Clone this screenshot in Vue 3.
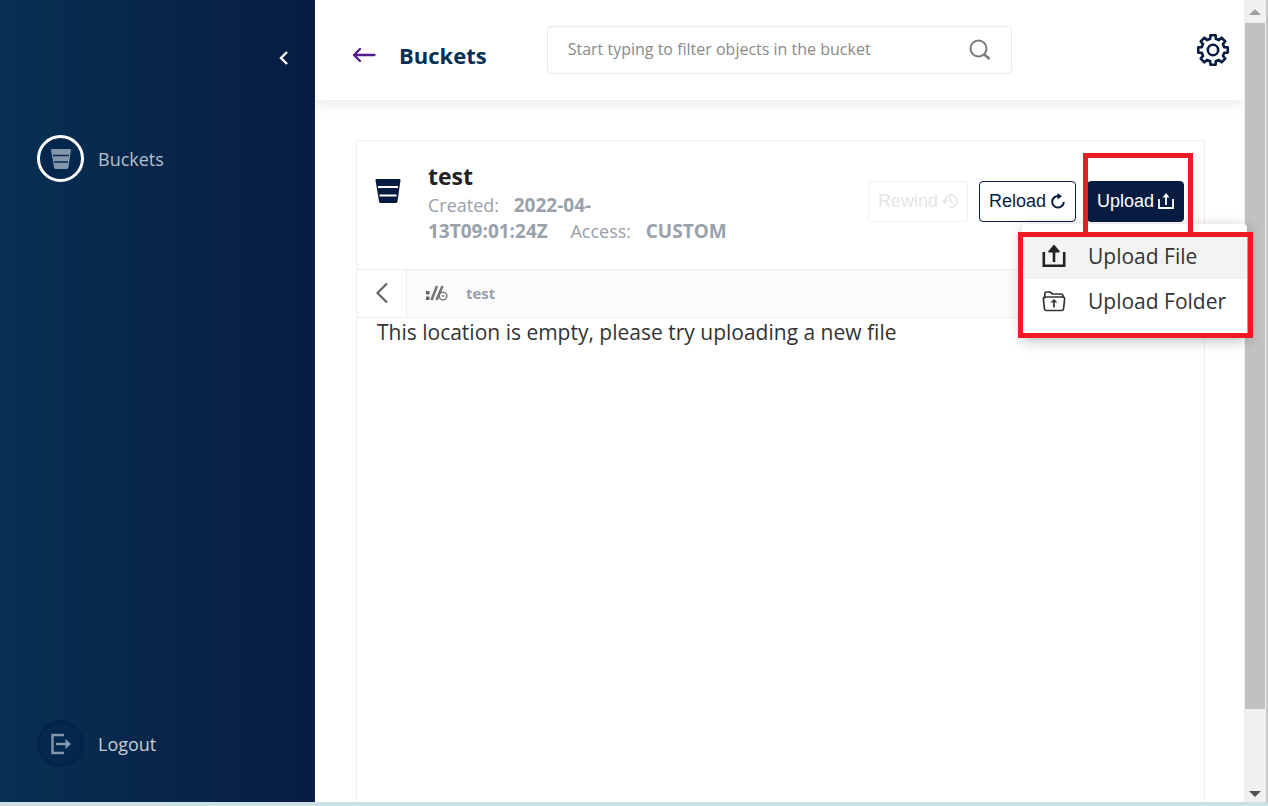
<script setup>
import { ref } from 'vue'

const filter = ref('')

const point = (radius, degrees) => {
  const angle = (degrees * Math.PI) / 180
  return `${(17 + radius * Math.cos(angle)).toFixed(2)} ${(17 + radius * Math.sin(angle)).toFixed(2)}`
}

const gearPath =
  'M' +
  Array.from({ length: 8 }, (_, i) => {
    const a = i * 45
    return [point(11.6, a - 14), point(15, a - 10), point(15, a + 10), point(11.6, a + 14)].join('L')
  }).join('L') +
  'Z'
</script>

<template>
  <div class="window">
    <div class="app">
      <nav class="sidebar">
        <button class="collapse" type="button" aria-label="Collapse menu">
          <svg width="12" height="16" viewBox="0 0 12 16"><path d="M9 2 3 8l6 6" fill="none" stroke="#fff" stroke-width="2.4" /></svg>
        </button>
        <a class="nav-item" href="#buckets">
          <span class="disc active">
            <svg width="20" height="20" viewBox="0 0 20 20">
              <path d="M1 0h18q1 0 1 1l-2.600 17.600Q17 20 16 20H4.500Q3.200 20 3 18.600L0 1Q0 0 1 0Z" fill="#8297ab" />
              <path d="M2 6.500h16M3 13h14" stroke="#06284c" stroke-width="1.600" />
            </svg>
          </span>
          Buckets
        </a>
        <a class="nav-item logout" href="#logout">
          <span class="disc">
            <svg width="20" height="22" viewBox="0 0 20 22" fill="none" stroke="#8297ab">
              <path d="M13 2H1.500v18H13" stroke-width="2.400" />
              <path d="M5 11h12" stroke-width="2.400" />
              <path d="m14.500 6 5.500 5-5.500 5Z" fill="#8297ab" stroke="none" />
            </svg>
          </span>
          Logout
        </a>
      </nav>

      <main class="main">
        <header class="topbar">
          <a class="back" href="#back" aria-label="Back to buckets">
            <svg width="24" height="16" viewBox="0 0 24 16" fill="none" stroke="#551a8b" stroke-width="2.300" stroke-linecap="round" stroke-linejoin="round"><path d="M22.500 8H2M8 2 2 8l6 6" /></svg>
          </a>
          <h1>Buckets</h1>
          <label class="search">
            <input v-model="filter" type="text" placeholder="Start typing to filter objects in the bucket" aria-label="Filter objects" />
            <svg width="22" height="22" viewBox="0 0 22 22" fill="none" stroke="#7a7a7a"><circle cx="9.500" cy="9.500" r="8" stroke-width="2" /><path d="m14.800 15 5.700 5" stroke-width="2.400" /></svg>
          </label>
          <button class="settings" type="button" aria-label="Settings">
            <svg width="34" height="34" viewBox="0 0 34 34" fill="none" stroke="#081c42" stroke-width="2.600" stroke-linejoin="round"><path :d="gearPath" /><circle cx="17" cy="17" r="5.200" /></svg>
          </button>
        </header>

        <section class="card">
          <div class="summary">
            <svg class="bucket" width="26" height="26" viewBox="0 0 26 26">
              <path d="M1.500 1h23q1.200 0 1 1.200l-3 21.300Q22.200 25 21 25H5.500Q4.200 25 4 23.500L.5 2.200Q.3 1 1.500 1Z" fill="#081c42" />
              <path d="M3 9h20M4.500 17.500h17" stroke="#fff" stroke-width="1.800" />
            </svg>
            <div class="details">
              <h2>test</h2>
              <p>Created: <b class="value">2022-04-<br />13T09:01:24Z</b> <span class="access">Access:</span> <b class="value">CUSTOM</b></p>
            </div>
            <div class="actions">
              <button class="btn disabled" type="button" disabled>
                Rewind
                <svg width="16" height="16" viewBox="0 0 16 16" fill="none" stroke="currentColor" stroke-width="1.700"><path d="M3 8a6 6 0 1 1 4 5.800M8.500 4.500V8l2.500 2" /><path d="M0 7h6L3 11Z" fill="currentColor" stroke="none" /></svg>
              </button>
              <button class="btn" type="button">
                Reload
                <svg width="16" height="16" viewBox="0 0 16 16" fill="none" stroke="currentColor" stroke-width="2"><path d="M8.500 3A5.800 5.800 0 1 0 13.800 9" /><path d="M7.500 0 12 3.300 7.500 6.500Z" fill="currentColor" stroke="none" /></svg>
              </button>
              <div class="upload">
                <button class="btn primary" type="button">
                  Upload
                  <svg width="16" height="16" viewBox="0 0 16 16" fill="none" stroke="currentColor" stroke-width="1.800"><path d="M1 6v9h14V6M8 12V3" /><path d="M4.500 4.500 8 0l3.500 4.500Z" fill="currentColor" stroke="none" /></svg>
                </button>
                <div class="menu">
                  <button class="menu-item hovered" type="button">
                    <svg width="24" height="24" viewBox="0 0 24 24" fill="none" stroke="#222" stroke-width="2.600"><path d="M1.800 8v13.700h20.400V8M12 18V4" /><path d="M6 7.500 12 .5l6 7-1 1H7Z" fill="#222" stroke="none" /></svg>
                    Upload File
                  </button>
                  <button class="menu-item" type="button">
                    <svg width="24" height="24" viewBox="0 0 24 24" fill="none" stroke="#333" stroke-width="1.700" stroke-linejoin="round"><path d="M2.800 9.500V4.800Q2.800 3 4.500 3H8l2.500 2H19q2 0 2 2v2M3 8h18q1.800 0 1.600 2l-1 9.500Q21.400 21.500 19.500 21.500h-15Q2.600 21.500 2.400 19.500L1.400 10Q1.200 8 3 8ZM12 18.500v-6" /><path d="m8.500 13.500 3.500-3.500 3.500 3.500Z" fill="#333" stroke="none" /></svg>
                    Upload Folder
                  </button>
                </div>
                <span class="mark mark-button"></span>
                <span class="mark mark-menu"></span>
              </div>
            </div>
          </div>
          <div class="path">
            <button class="up" type="button" aria-label="Up one level">
              <svg width="14" height="22" viewBox="0 0 14 22"><path d="M12 1.500 2.500 11l9.500 9.500" fill="none" stroke="#666" stroke-width="2.200" /></svg>
            </button>
            <div class="crumbs">
              <svg width="22" height="16" viewBox="0 0 22 16" fill="none" stroke="#777"><path d="M0 6h3.500v3.500H0zM0 11.500h3.500V15H0z" fill="#666" stroke="none" /><path d="m5.500 15 5.500-14M10.500 15l6-14" stroke-width="2.600" /><circle cx="17" cy="11" r="3.800" stroke-width="1.400" /><path d="M15.500 11h3" stroke-width="1.400" /></svg>
              <a href="#test">test</a>
            </div>
          </div>
          <p class="empty">This location is empty, please try uploading a new file</p>
        </section>
      </main>

      <div class="scrollbar" aria-hidden="true">
        <svg width="12" height="6" viewBox="0 0 12 6"><path d="M0 6 6 0l6 6Z" fill="#a0a0a0" /></svg>
        <div class="thumb"></div>
        <svg width="12" height="6" viewBox="0 0 12 6"><path d="m0 0 6 6 6-6Z" fill="#505050" /></svg>
      </div>
    </div>
    <div class="bottom-edge"></div>
  </div>
</template>

<style>
body { margin: 0; }
</style>

<style scoped>
* { box-sizing: border-box; }
svg { display: block; flex: none; }
h1, h2, p { margin: 0; }
a { text-decoration: none; color: inherit; }
button { padding: 0; border: 0; background: none; font: inherit; color: inherit; cursor: pointer; }
.window { display: flex; flex-direction: column; min-height: 100vh; font-family: "Open Sans", "Noto Sans", sans-serif; color: #333; background: #fff; }
.app { flex: 1; display: flex; }
.sidebar { flex: none; width: 315px; padding: 48px 23px 35px 37px; display: flex; flex-direction: column; background: linear-gradient(90deg, #073052 0%, #081c42 100%); border-right: 1px solid #10254c; }
.collapse { align-self: flex-end; width: 14px; height: 20px; display: grid; place-items: center; }
.nav-item { display: flex; align-items: center; gap: 14px; margin-top: 67px; font-size: 18px; color: #b4c0cc; }
.nav-item.logout { margin-top: auto; color: #c4ced8; }
.disc { width: 47px; height: 47px; border-radius: 50%; border: 3px solid #04234a; background: #03274d; display: grid; place-items: center; }
.disc.active { border-color: #fff; }
.main { flex: 1; min-width: 0; display: flex; flex-direction: column; }
.topbar { height: 100px; padding: 0 14px 0 37px; display: flex; align-items: center; box-shadow: 0 3px 12px rgba(0, 0, 0, .1); }
.back { margin-top: 10px; }
h1 { margin: 10px 60px 0 23px; font-size: 22px; line-height: 30px; font-weight: 700; color: #073052; }
.search { flex: 0 1 465px; height: 48px; padding: 0 20px; display: flex; align-items: center; border: 1px solid #eaeaea; border-radius: 4px; }
.search input { flex: 1; min-width: 0; padding: 0 0 2px; border: 0; outline: 0; font: 16px "Open Sans", sans-serif; color: #555; }
.search input::placeholder { color: #8a8a8a; opacity: 1; }
.settings { margin-left: auto; }
.card { flex: 1; margin: 40px 39px 0 41px; border: 1px solid #f0f0f0; border-bottom: 0; }
.summary { height: 128px; padding: 19px 20px; display: flex; }
.bucket { margin: 18px 27px 0 -2px; }
.details { flex: 1; white-space: nowrap; color: #99a1ab; font-size: 18px; line-height: 26px; }
h2 { font-size: 23px; line-height: 32px; color: #222; }
.value { margin-left: 10px; font-size: 19px; }
.access { margin-left: 18px; }
.actions { display: flex; gap: 11px; padding-top: 21px; }
.btn { height: 41px; padding: 0 9px 2px; display: flex; align-items: center; gap: 4px; border: 1px solid #081c42; border-radius: 4px; font: 18px/22px "Liberation Sans", Arial, sans-serif; color: #081c42; background: #fff; }
.btn.disabled { border-color: #f1f1f1; color: #e6e6e6; }
.btn.primary { background: #081c42; color: #fff; }
.upload { position: relative; }
.menu { position: absolute; top: 43px; right: -63px; width: 225px; padding: 10px 0 12px; background: #fff; border-radius: 4px; box-shadow: 0 4px 14px rgba(0, 0, 0, .3); }
.menu-item { width: 100%; height: 45px; padding: 0 0 2px 20px; display: flex; align-items: center; gap: 22px; font-size: 21px; white-space: nowrap; }
.menu-item.hovered { background: #f3f3f3; }
.mark { position: absolute; border: 5px solid #ed1c24; pointer-events: none; }
.mark-button { inset: -28px -9px auto auto; width: 110px; height: 84px; }
.mark-menu { inset: 51px -69px auto auto; width: 235px; height: 106px; }
.path { height: 49px; display: flex; border: solid #eaedee; border-width: 1px 0; }
.up { width: 50px; padding-bottom: 2px; display: grid; place-items: center; border-right: 1px solid #eaedee; }
.crumbs { flex: 1; padding: 0 0 2px 19px; display: flex; align-items: center; gap: 18px; background: #fbfbfb; font-size: 15px; font-weight: 700; color: #969fa8; }
.empty { padding-left: 20px; font-size: 21px; line-height: 28px; }
.scrollbar { flex: none; width: 24px; padding: 9px 0 5px; border-right: 2px solid #c8c8c8; display: flex; flex-direction: column; align-items: center; background: #f0f0f0; }
.thumb { width: 20px; flex: 0 0 87%; margin: 8px 0 auto; background: #c1c1c1; }
.bottom-edge { height: 4px; background: #cde0e5; }
</style>
